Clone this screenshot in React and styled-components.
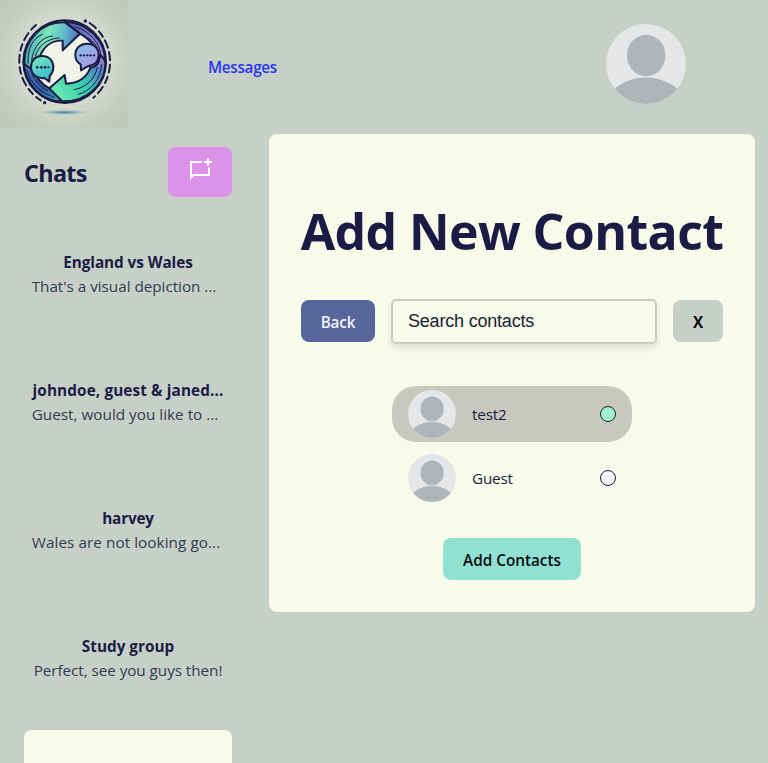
import React from 'react';
import styled, { createGlobalStyle } from 'styled-components';

const GlobalStyle = createGlobalStyle`
  *, *::before, *::after { box-sizing: border-box; }
  html, body { margin: 0; height: 100%; overflow: hidden; }
  body {
    background: #c7d0c7;
    color: #1a1c45;
    font-family: 'Segoe UI', 'Open Sans', 'Noto Sans', sans-serif;
    font-size: 15.3px;
    line-height: 24px;
  }
  h1, h2, h3, p, ul { margin: 0; padding: 0; }
  button { border: 0; font-family: inherit; cursor: pointer; }
`;

const Page = styled.div`
  height: 763px;
  overflow: hidden;
`;

const Header = styled.header`
  display: flex;
  align-items: center;
  height: 128px;
  padding-right: 82px;
`;

const LogoSvg = styled.svg`
  display: block;
  width: 128px;
  height: 128px;
`;

const NavLink = styled.a`
  margin: 6px auto 0 80px;
  color: #2a35f5;
  font-weight: 600;
  font-size: 15.3px;
  letter-spacing: -0.3px;
  text-decoration: none;
`;

const AvatarSvg = styled.svg`
  display: block;
  flex: none;
  width: ${(p) => p.$size}px;
  height: ${(p) => p.$size}px;
  border-radius: 50%;
`;

const Main = styled.main`
  display: flex;
  align-items: flex-start;
  gap: 37px;
  padding: 6px 13px 0 24px;
`;

const Sidebar = styled.aside`
  width: 208px;
  flex: none;
  padding-top: 13px;
`;

const SidebarHeader = styled.div`
  display: flex;
  align-items: center;
  justify-content: space-between;
  height: 50px;
`;

const SidebarTitle = styled.h2`
  padding-top: 1px;
  font-size: 23.4px;
  font-weight: 700;
  line-height: 32px;
  letter-spacing: -0.7px;
`;

const NewChatButton = styled.button`
  display: flex;
  justify-content: center;
  width: 64px;
  height: 50px;
  padding: 10px 0 0;
  border-radius: 8px;
  background: #dc92e8;
`;

const ChatList = styled.ul`
  display: flex;
  flex-direction: column;
  gap: 16px;
  padding-top: 21px;
  list-style: none;
`;

const ChatItem = styled.li`
  height: 112px;
  padding: 32px 0;
  border-radius: 8px;
  background: ${(p) => (p.$active ? '#f8fbe9' : 'transparent')};
  text-align: center;
  white-space: nowrap;
`;

const ChatName = styled.h3`
  font-size: 15.3px;
  font-weight: 700;
  line-height: 24px;
  letter-spacing: ${(p) => p.$tracking || 0}px;
`;

const ChatPreview = styled.p`
  color: #343a55;
  padding-right: ${(p) => p.$shift || 0}px;
  letter-spacing: ${(p) => p.$tracking || 0}px;
`;

const Panel = styled.section`
  display: flex;
  flex-direction: column;
  align-items: center;
  width: 486px;
  height: 478px;
  padding: 64px 32px 32px;
  border-radius: 8px;
  background: #f8fbe9;
`;

const PanelTitle = styled.h1`
  margin-top: -1px;
  font-size: 50px;
  font-weight: 700;
  line-height: 68px;
  white-space: nowrap;
  letter-spacing: -0.6px;
`;

const SearchRow = styled.div`
  display: flex;
  align-items: flex-start;
  gap: 16px;
  width: 100%;
  height: 45px;
  margin-top: 34px;
`;

const Button = styled.button`
  flex: none;
  width: ${(p) => p.$width}px;
  height: 42px;
  margin-top: ${(p) => p.$offset || 0}px;
  padding: 1px 0 0;
  border-radius: 8px;
  background: ${(p) => p.$bg};
  color: ${(p) => p.$color || '#0b0b0f'};
  font-size: 15.3px;
  font-weight: ${(p) => p.$weight || 600};
  line-height: 24px;
  letter-spacing: ${(p) => p.$tracking || 0}px;
`;

const SearchInput = styled.input`
  flex: 1;
  min-width: 0;
  height: 45px;
  padding: 0 15px 1px;
  border: 2px solid #c7cfc4;
  border-radius: 5px;
  outline: 0;
  background: #f8fbe9;
  box-shadow: 0 4px 6px rgba(0, 0, 0, 0.1);
  color: #1a1c35;
  font-family: 'Liberation Sans', Arial, sans-serif;
  font-size: 18px;
  letter-spacing: -0.2px;
  &::placeholder { color: #1a1c35; opacity: 1; }
`;

const ContactList = styled.ul`
  display: flex;
  flex-direction: column;
  gap: 8px;
  width: 240px;
  margin-top: 42px;
  list-style: none;
`;

const Contact = styled.li`
  display: flex;
  align-items: center;
  gap: 16px;
  height: 56px;
  padding: 0 16px;
  border-radius: 24px;
  background: ${(p) => (p.$selected ? '#c8c9bc' : 'transparent')};
`;

const ContactName = styled.span`
  flex: 1;
  letter-spacing: -0.2px;
`;

const Radio = styled.span`
  width: 16px;
  height: 16px;
  border: 1px solid #1a1c35;
  border-radius: 50%;
  background: ${(p) => (p.$checked ? '#9ff2cc' : '#f6f3fb')};
`;

const Footer = styled.div`
  margin-top: 32px;
`;

function Avatar({ size }) {
  return (
    <AvatarSvg $size={size} viewBox="0 0 80 80">
      <rect width="80" height="80" fill="#e4e6e8" />
      <ellipse cx="40.2" cy="31.5" rx="19.2" ry="20.7" fill="#aeb4b8" />
      <ellipse cx="40" cy="85" rx="41" ry="31.5" fill="#aeb4b8" />
    </AvatarSvg>
  );
}

function Logo() {
  return (
    <LogoSvg viewBox="0 0 384 384">
      <defs>
        <radialGradient id="glow" cx=".5" cy=".48" r=".7">
          <stop offset="0" stopColor="#e9ece0" />
          <stop offset=".5" stopColor="#d4d9cd" />
          <stop offset=".75" stopColor="#c6ccc0" />
          <stop offset="1" stopColor="#bfc6bb" />
        </radialGradient>
        <linearGradient id="upper" x1="0" y1=".2" x2="1" y2=".4">
          <stop offset="0" stopColor="#429fb6" />
          <stop offset=".42" stopColor="#7be6b8" />
          <stop offset=".7" stopColor="#62b9cf" />
          <stop offset="1" stopColor="#4c64ad" />
        </linearGradient>
        <linearGradient id="lower" x1="0" y1=".8" x2="1" y2="0">
          <stop offset="0" stopColor="#72edb2" />
          <stop offset=".45" stopColor="#35cdad" />
          <stop offset=".75" stopColor="#5389c3" />
          <stop offset="1" stopColor="#bd78d9" />
        </linearGradient>
        <linearGradient id="violet" x1="0" y1="0" x2="1" y2="1">
          <stop offset="0" stopColor="#465eaa" />
          <stop offset=".65" stopColor="#9287da" />
          <stop offset="1" stopColor="#cf83e5" />
        </linearGradient>
        <linearGradient id="blue" x1="0" y1="0" x2="1" y2="1">
          <stop offset="0" stopColor="#4b75b6" />
          <stop offset=".6" stopColor="#315da5" />
          <stop offset="1" stopColor="#43acc5" />
        </linearGradient>
        <linearGradient id="bubbleLeft" x1="0" y1="0" x2=".4" y2="1">
          <stop offset="0" stopColor="#80ecc6" />
          <stop offset="1" stopColor="#38b9c6" />
        </linearGradient>
        <linearGradient id="bubbleRight" x1="0" y1="0" x2=".6" y2="1">
          <stop offset="0" stopColor="#86c4ea" />
          <stop offset="1" stopColor="#a795e3" />
        </linearGradient>
        <radialGradient id="shade">
          <stop offset="0" stopColor="#2f83a7" />
          <stop offset=".5" stopColor="#78aebb" stopOpacity=".65" />
          <stop offset="1" stopColor="#b9cdc8" stopOpacity="0" />
        </radialGradient>
      </defs>
      <rect width="384" height="384" fill="url(#glow)" />
      <ellipse cx="193" cy="337" rx="80" ry="9" fill="url(#shade)" />
      <g fill="none" stroke="#1b1b43" strokeWidth="6" strokeLinecap="round">
        <path d="M108 75A141 141 0 0 0 122 301" strokeDasharray="20 13 25 13 20 13 24 13" />
        <path d="M269 69A141 141 0 0 1 280 293" strokeDasharray="24 13 20 13 24 13 25 13" />
      </g>
      <circle cx="256" cy="63" r="5" fill="#1b1b43" />
      <circle cx="134" cy="308" r="5" fill="#1b1b43" />
      <g stroke="#1b1b43" strokeWidth="6" strokeLinejoin="round">
        <circle cx="194" cy="185" r="124" fill="#f0f3e8" />
        <path d="M195 66C262 65 316 122 316 185C316 202 311 219 303 235L291 170C288 138 268 117 240 101Z" fill="url(#violet)" />
        <path d="M72 176C68 247 122 306 187 304L148 265C124 252 107 232 96 202Z" fill="url(#blue)" />
        <path d="M73 190C71 121 124 64 195 67L240 101L188 151V122C151 120 129 145 119 171C99 171 94 187 98 208C88 201 77 198 73 190Z" fill="url(#upper)" />
        <path d="M316 190C316 251 263 306 187 304L148 265L194 225L198 251C239 250 262 228 271 203C293 201 299 186 299 164C309 171 315 180 316 190Z" fill="url(#lower)" />
      </g>
      <g fill="none" stroke="#1b1b43" strokeWidth="3" strokeLinecap="round">
        <path d="M84 190C82 145 98 115 127 103" />
        <path d="M95 180C100 138 127 110 158 108" />
        <path d="M106 168C115 138 139 116 177 114" />
        <path d="M81 212C92 252 121 278 163 292" />
        <path d="M96 222C105 243 121 259 143 272" />
        <path d="M226 80C270 94 302 130 303 172" />
        <path d="M246 106C268 114 284 127 291 144" />
        <path d="M305 194C301 240 272 273 235 283" />
        <path d="M292 202C285 239 257 263 222 269" />
      </g>
      <g stroke="#1b1b43" strokeWidth="6" strokeLinejoin="round">
        <path d="M126 168C147 168 160 182 160 201C160 212 156 221 149 228L148 245L133 234C109 237 93 222 93 201C93 182 106 168 126 168Z" fill="url(#bubbleLeft)" />
        <path d="M261 131C282 131 296 145 296 165C296 184 284 197 263 199L243 211L242 193C231 187 226 177 226 165C226 145 241 131 261 131Z" fill="url(#bubbleRight)" />
      </g>
      <g fill="#1b1b43">
        <circle cx="112" cy="202" r="4" />
        <circle cx="124" cy="202" r="4" />
        <circle cx="135" cy="202" r="4" />
        <circle cx="145" cy="202" r="3" />
        <circle cx="242" cy="166" r="3.5" />
        <circle cx="252" cy="166" r="3.5" />
        <circle cx="262" cy="166" r="3.5" />
        <circle cx="272" cy="166" r="3.5" />
        <circle cx="282" cy="166" r="3.5" />
      </g>
    </LogoSvg>
  );
}

function NewChatIcon() {
  return (
    <svg width="24" height="24" viewBox="0 0 24 24" fill="#fff">
      <path d="M2 4H14V6H4V18.2L5.2 17H20V10.5H22V19H6L2 23Z" />
      <path d="M19 1H21V4H24V6H21V9H19V6H16V4H19Z" />
    </svg>
  );
}

const chats = [
  { name: 'England vs Wales', preview: "That's a visual depiction ...", shift: 8, tracking: -0.04, nameTracking: -0.06 },
  { name: 'johndoe, guest & janed...', preview: 'Guest, would you like to ...', shift: 6, nameTracking: 0.12 },
  { name: 'harvey', preview: 'Wales are not looking go...', shift: 4, tracking: 0.05, nameTracking: -0.2 },
  { name: 'Study group', preview: 'Perfect, see you guys then!', tracking: -0.07 },
  { name: '', preview: '', active: true },
];

const contacts = [
  { name: 'test2', selected: true },
  { name: 'Guest', selected: false },
];

export default function App() {
  return (
    <Page>
      <GlobalStyle />
      <Header>
        <Logo />
        <NavLink>Messages</NavLink>
        <Avatar size={80} />
      </Header>
      <Main>
        <Sidebar>
          <SidebarHeader>
            <SidebarTitle>Chats</SidebarTitle>
            <NewChatButton aria-label="New chat">
              <NewChatIcon />
            </NewChatButton>
          </SidebarHeader>
          <ChatList>
            {chats.map((chat, i) => (
              <ChatItem key={i} $active={chat.active}>
                <ChatName $tracking={chat.nameTracking}>{chat.name}</ChatName>
                <ChatPreview $shift={chat.shift} $tracking={chat.tracking}>{chat.preview}</ChatPreview>
              </ChatItem>
            ))}
          </ChatList>
        </Sidebar>
        <Panel>
          <PanelTitle>Add New Contact</PanelTitle>
          <SearchRow>
            <Button $width={74} $offset={1} $bg="#58679b" $color="#f4f4fb" $tracking={-0.2}>Back</Button>
            <SearchInput placeholder="Search contacts" />
            <Button $width={50} $offset={1} $bg="#c7d0c7" $weight={700}>X</Button>
          </SearchRow>
          <ContactList>
            {contacts.map((c) => (
              <Contact key={c.name} $selected={c.selected}>
                <Avatar size={48} />
                <ContactName>{c.name}</ContactName>
                <Radio $checked={c.selected} />
              </Contact>
            ))}
          </ContactList>
          <Footer>
            <Button $width={138} $bg="#8fe1d2">Add Contacts</Button>
          </Footer>
        </Panel>
      </Main>
    </Page>
  );
}
